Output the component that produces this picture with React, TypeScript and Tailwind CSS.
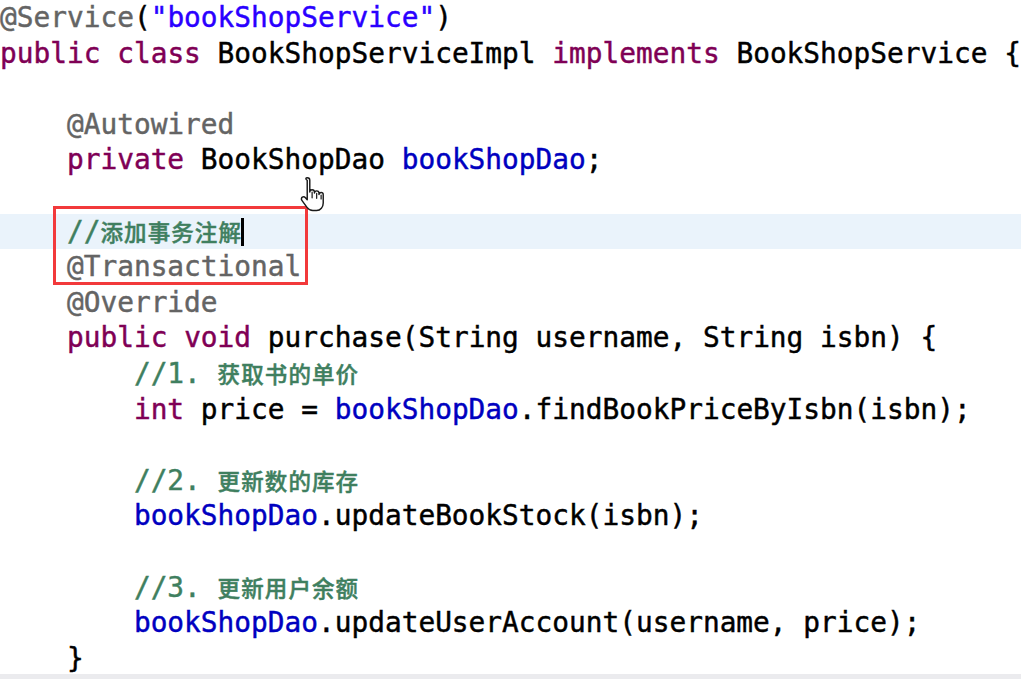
type Tok = [string, string];

const K = "text-[#7f0055]"; // keyword
const A = "text-[#646464]"; // annotation
const S = "text-[#2a00ff]"; // string
const F = "text-[#0000c0]"; // field
const C = "text-[#3f7f5f]"; // comment
const D = "text-black";

const CJK = "font-['Noto_Sans_CJK_SC',sans-serif] font-medium text-[22.5px] tracking-[1.1px]";

const lines: { toks: Tok[]; cjk?: string; active?: boolean; caret?: boolean }[] = [
  { toks: [[A, "@Service"], [D, "("], [S, '"bookShopService"'], [D, ")"]] },
  { toks: [[K, "public"], [D, " "], [K, "class"], [D, " BookShopServiceImpl "], [K, "implements"], [D, " BookShopService {"]] },
  { toks: [] },
  { toks: [[D, "    "], [A, "@Autowired"]] },
  { toks: [[D, "    "], [K, "private"], [D, " BookShopDao "], [F, "bookShopDao"], [D, ";"]] },
  { toks: [] },
  { toks: [[D, "    "], [C, "//"]], cjk: "添加事务注解", active: true, caret: true },
  { toks: [[D, "    "], [A, "@Transactional"]] },
  { toks: [[D, "    "], [A, "@Override"]] },
  { toks: [[D, "    "], [K, "public"], [D, " "], [K, "void"], [D, " purchase(String username, String isbn) {"]] },
  { toks: [[D, "        "], [C, "//1. "]], cjk: "获取书的单价" },
  { toks: [[D, "        "], [K, "int"], [D, " price = "], [F, "bookShopDao"], [D, ".findBookPriceByIsbn(isbn);"]] },
  { toks: [] },
  { toks: [[D, "        "], [C, "//2. "]], cjk: "更新数的库存" },
  { toks: [[D, "        "], [F, "bookShopDao"], [D, ".updateBookStock(isbn);"]] },
  { toks: [] },
  { toks: [[D, "        "], [C, "//3. "]], cjk: "更新用户余额" },
  { toks: [[D, "        "], [F, "bookShopDao"], [D, ".updateUserAccount(username, price);"]] },
  { toks: [[D, "    }"]] },
];

function HandCursor() {
  return (
    <svg width="30" height="40" viewBox="0 0 26 36" className="absolute left-[299px] top-[175px]">
      <path
        d="M7 2.5c1.3 0 2.2 1 2.2 2.3v10.5c0-1.2 1-2 2.1-2s2.1.9 2.1 2v1c0-1.1.9-2 2-2s2.1.9 2.1 2v1.3c0-1 .9-1.8 1.9-1.8s1.9.8 1.9 1.9v7.5c0 3.5-2.4 6.8-6 6.8h-3.4c-2.3 0-3.8-.9-5.2-2.8l-4.6-6.4c-.7-1-.5-2.2.4-2.8.9-.6 2-.4 2.8.4l1.6 1.8V4.8C4.8 3.5 5.7 2.5 7 2.5z"
        fill="white"
        stroke="#1a1a1a"
        strokeWidth="1.3"
        strokeLinejoin="round"
      />
      <path d="M11.3 15.5v5M15.4 16.5v4.5M19.4 18v3.5" stroke="#1a1a1a" strokeWidth="1.1" strokeLinecap="round" />
    </svg>
  );
}

export default function App() {
  return (
    <div className="relative h-[679px] w-[1021px] overflow-hidden bg-white">
      <div className="flex flex-col font-['DejaVu_Sans_Mono',monospace] text-[27.8px] leading-[35.6px] [-webkit-text-stroke:0.45px_currentColor]">
        {lines.map((l, i) => (
          <div key={i} className={`h-[35.6px] whitespace-pre ${l.active ? "bg-[#eaf3fb]" : ""}`}>
            {l.toks.map(([c, t], j) => (
              <span key={j} className={c}>
                {t}
              </span>
            ))}
            {l.cjk && <span className={`${C} ${CJK}`}>{l.cjk}</span>}
            {l.caret && <span className="ml-[-1px] inline-block h-[28px] w-[2.5px] bg-black align-[-5px]" />}
          </div>
        ))}
      </div>

      <div className="absolute left-[53px] top-[206px] h-[79px] w-[255px] border-[3px] border-[#f2393b]" />
      <HandCursor />
      <div className="absolute bottom-0 left-0 h-[5px] w-full bg-[#ebebee]" />
    </div>
  );
}
